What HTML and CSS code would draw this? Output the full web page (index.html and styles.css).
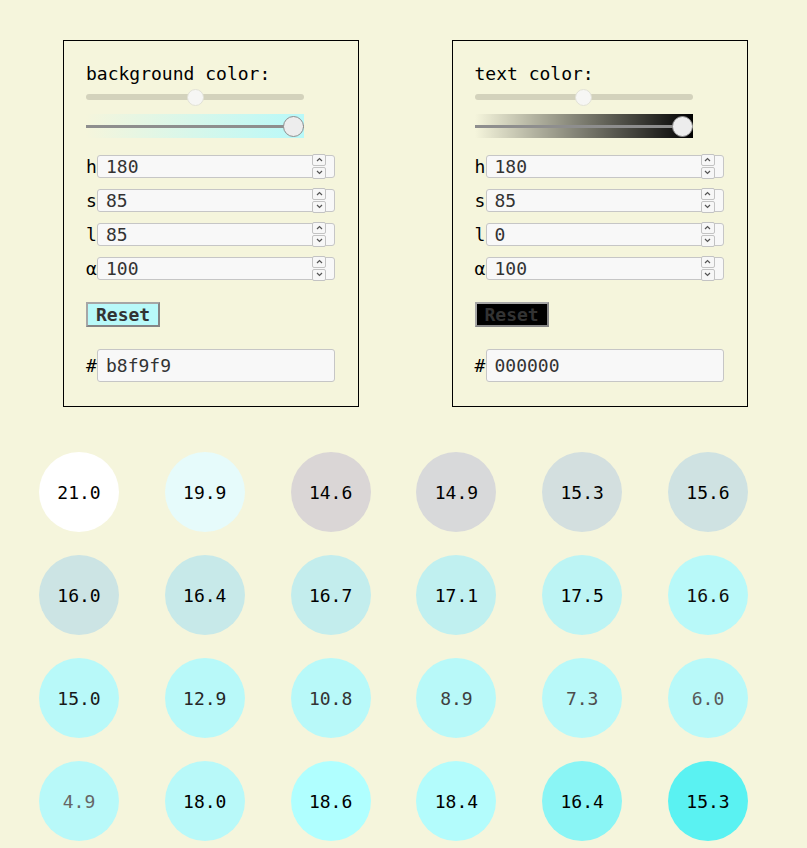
FILE: index.html
```html
<!DOCTYPE html>
<html>
<head>
  <meta charset="UTF-8">
  <link rel="stylesheet" href="styles.css">
</head>
<body>
  <div class="pickers">
    <div class="picker">
      <div class="picker-title">background color:</div>
      <input type="range" class="hue-slider" min="0" max="360" value="180">
      <input type="range" class="alpha-slider alpha-bg" min="0" max="100" value="100">
      <div class="fields">
        <div class="field">
          <span class="field-label">h</span>
          <div class="number-box">
            <input type="number" value="180">
            <div class="spin">
              <span class="spin-btn"><svg width="7" height="5" viewBox="0 0 7 5"><polyline points="1,4 3.5,1.5 6,4" fill="none" stroke="#555" stroke-width="1.2"/></svg></span>
              <span class="spin-btn"><svg width="7" height="5" viewBox="0 0 7 5"><polyline points="1,1 3.5,3.5 6,1" fill="none" stroke="#555" stroke-width="1.2"/></svg></span>
            </div>
          </div>
        </div>
        <div class="field">
          <span class="field-label">s</span>
          <div class="number-box">
            <input type="number" value="85">
            <div class="spin">
              <span class="spin-btn"><svg width="7" height="5" viewBox="0 0 7 5"><polyline points="1,4 3.5,1.5 6,4" fill="none" stroke="#555" stroke-width="1.2"/></svg></span>
              <span class="spin-btn"><svg width="7" height="5" viewBox="0 0 7 5"><polyline points="1,1 3.5,3.5 6,1" fill="none" stroke="#555" stroke-width="1.2"/></svg></span>
            </div>
          </div>
        </div>
        <div class="field">
          <span class="field-label">l</span>
          <div class="number-box">
            <input type="number" value="85">
            <div class="spin">
              <span class="spin-btn"><svg width="7" height="5" viewBox="0 0 7 5"><polyline points="1,4 3.5,1.5 6,4" fill="none" stroke="#555" stroke-width="1.2"/></svg></span>
              <span class="spin-btn"><svg width="7" height="5" viewBox="0 0 7 5"><polyline points="1,1 3.5,3.5 6,1" fill="none" stroke="#555" stroke-width="1.2"/></svg></span>
            </div>
          </div>
        </div>
        <div class="field">
          <span class="field-label">α</span>
          <div class="number-box">
            <input type="number" value="100">
            <div class="spin">
              <span class="spin-btn"><svg width="7" height="5" viewBox="0 0 7 5"><polyline points="1,4 3.5,1.5 6,4" fill="none" stroke="#555" stroke-width="1.2"/></svg></span>
              <span class="spin-btn"><svg width="7" height="5" viewBox="0 0 7 5"><polyline points="1,1 3.5,3.5 6,1" fill="none" stroke="#555" stroke-width="1.2"/></svg></span>
            </div>
          </div>
        </div>
      </div>
      <button class="reset reset-bg">Reset</button>
      <div class="hex-row"><span class="field-label">#</span><input type="text" class="hex-input" value="b8f9f9"></div>
    </div>

    <div class="picker">
      <div class="picker-title">text color:</div>
      <input type="range" class="hue-slider" min="0" max="360" value="180">
      <input type="range" class="alpha-slider alpha-text" min="0" max="100" value="100">
      <div class="fields">
        <div class="field">
          <span class="field-label">h</span>
          <div class="number-box">
            <input type="number" value="180">
            <div class="spin">
              <span class="spin-btn"><svg width="7" height="5" viewBox="0 0 7 5"><polyline points="1,4 3.5,1.5 6,4" fill="none" stroke="#555" stroke-width="1.2"/></svg></span>
              <span class="spin-btn"><svg width="7" height="5" viewBox="0 0 7 5"><polyline points="1,1 3.5,3.5 6,1" fill="none" stroke="#555" stroke-width="1.2"/></svg></span>
            </div>
          </div>
        </div>
        <div class="field">
          <span class="field-label">s</span>
          <div class="number-box">
            <input type="number" value="85">
            <div class="spin">
              <span class="spin-btn"><svg width="7" height="5" viewBox="0 0 7 5"><polyline points="1,4 3.5,1.5 6,4" fill="none" stroke="#555" stroke-width="1.2"/></svg></span>
              <span class="spin-btn"><svg width="7" height="5" viewBox="0 0 7 5"><polyline points="1,1 3.5,3.5 6,1" fill="none" stroke="#555" stroke-width="1.2"/></svg></span>
            </div>
          </div>
        </div>
        <div class="field">
          <span class="field-label">l</span>
          <div class="number-box">
            <input type="number" value="0">
            <div class="spin">
              <span class="spin-btn"><svg width="7" height="5" viewBox="0 0 7 5"><polyline points="1,4 3.5,1.5 6,4" fill="none" stroke="#555" stroke-width="1.2"/></svg></span>
              <span class="spin-btn"><svg width="7" height="5" viewBox="0 0 7 5"><polyline points="1,1 3.5,3.5 6,1" fill="none" stroke="#555" stroke-width="1.2"/></svg></span>
            </div>
          </div>
        </div>
        <div class="field">
          <span class="field-label">α</span>
          <div class="number-box">
            <input type="number" value="100">
            <div class="spin">
              <span class="spin-btn"><svg width="7" height="5" viewBox="0 0 7 5"><polyline points="1,4 3.5,1.5 6,4" fill="none" stroke="#555" stroke-width="1.2"/></svg></span>
              <span class="spin-btn"><svg width="7" height="5" viewBox="0 0 7 5"><polyline points="1,1 3.5,3.5 6,1" fill="none" stroke="#555" stroke-width="1.2"/></svg></span>
            </div>
          </div>
        </div>
      </div>
      <button class="reset reset-text">Reset</button>
      <div class="hex-row"><span class="field-label">#</span><input type="text" class="hex-input" value="000000"></div>
    </div>
  </div>

  <div class="swatches">
    <div class="swatch" style="background: #ffffff; color: #000;">21.0</div>
    <div class="swatch" style="background: #e6fbfb; color: #000;">19.9</div>
    <div class="swatch" style="background: #dad6d6; color: #000;">14.6</div>
    <div class="swatch" style="background: #d8d9da; color: #000;">14.9</div>
    <div class="swatch" style="background: #d3dfdf; color: #000;">15.3</div>
    <div class="swatch" style="background: #cfe2e2; color: #000;">15.6</div>

    <div class="swatch" style="background: #cce4e4; color: #000;">16.0</div>
    <div class="swatch" style="background: #c7e9e9; color: #000;">16.4</div>
    <div class="swatch" style="background: #c3eded; color: #000;">16.7</div>
    <div class="swatch" style="background: #c0f0f0; color: #000;">17.1</div>
    <div class="swatch" style="background: #bcf4f4; color: #000;">17.5</div>
    <div class="swatch" style="background: #b8f9f9; color: #0d0d0d;">16.6</div>

    <div class="swatch" style="background: #b8f9f9; color: #191919;">15.0</div>
    <div class="swatch" style="background: #b8f9f9; color: #262626;">12.9</div>
    <div class="swatch" style="background: #b8f9f9; color: #333333;">10.8</div>
    <div class="swatch" style="background: #b8f9f9; color: #404040;">8.9</div>
    <div class="swatch" style="background: #b8f9f9; color: #4d4d4d;">7.3</div>
    <div class="swatch" style="background: #b8f9f9; color: #595959;">6.0</div>

    <div class="swatch" style="background: #b8f9f9; color: #666666;">4.9</div>
    <div class="swatch" style="background: #b8f9f9; color: #000;">18.0</div>
    <div class="swatch" style="background: #b0ffff; color: #000;">18.6</div>
    <div class="swatch" style="background: #b3fcfc; color: #000;">18.4</div>
    <div class="swatch" style="background: #8af5f5; color: #000;">16.4</div>
    <div class="swatch" style="background: #5af2f2; color: #000;">15.3</div>
  </div>
</body>
</html>
```

FILE: styles.css
```css
:root {
  --page-bg: #f5f5dc;
  --field-bg: #f8f8f8;
  --field-border: #c6c6c6;
  --track-color: #d3d2bc;
  --mono: "DejaVu Sans Mono", "Liberation Mono", monospace;
}

body {
  margin: 0;
  background: var(--page-bg);
  font-family: var(--mono);
  font-size: 18px;
  color: #000;
}

.pickers {
  display: flex;
  gap: 92.5px;
  padding: 40px 0 0 63px;
}

.picker {
  box-sizing: border-box;
  width: 296px;
  border: 1px solid #000;
  padding: 22px 22px 24px 22px;
  display: flex;
  flex-direction: column;
  align-items: flex-start;
}

.picker-title {
  line-height: 21px;
}

/* hue slider */
.hue-slider {
  -webkit-appearance: none;
  appearance: none;
  width: 218px;
  height: 16px;
  margin: 5px 0 0 0;
  background: transparent;
}

.hue-slider::-webkit-slider-runnable-track {
  height: 6px;
  border-radius: 3px;
  background: var(--track-color);
}

.hue-slider::-webkit-slider-thumb {
  -webkit-appearance: none;
  width: 17px;
  height: 17px;
  margin-top: -5.5px;
  border-radius: 50%;
  background: #f6f6f4;
  border: 1px solid #e2e2d6;
  box-sizing: border-box;
}

/* alpha slider */
.alpha-slider {
  -webkit-appearance: none;
  appearance: none;
  width: 218px;
  height: 24px;
  margin: 9px 0 0 0;
}

.alpha-bg {
  background: linear-gradient(to right, rgba(184, 249, 249, 0), #b8f9f9);
}

.alpha-text {
  background: linear-gradient(to right, rgba(0, 0, 0, 0), #000);
}

.alpha-slider::-webkit-slider-runnable-track {
  height: 3px;
  background: #8e8e8e;
}

.alpha-slider::-webkit-slider-thumb {
  -webkit-appearance: none;
  width: 21px;
  height: 21px;
  margin-top: -9px;
  border-radius: 50%;
  background: #ededed;
  border: 1px solid #8e8e8e;
  box-sizing: border-box;
}

.fields {
  display: flex;
  flex-direction: column;
  gap: 11px;
  margin-top: 17px;
}

.field,
.hex-row {
  display: flex;
  align-items: center;
}

.field-label {
  width: 11px;
  line-height: 21px;
}

.number-box {
  box-sizing: border-box;
  width: 238px;
  height: 23px;
  display: flex;
  align-items: center;
  padding: 0 8px;
  background: var(--field-bg);
  border: 1px solid var(--field-border);
  border-radius: 3px;
}

.number-box input {
  flex: 1;
  min-width: 0;
  padding: 0;
  margin: 0;
  border: none;
  outline: none;
  background: transparent;
  font-family: var(--mono);
  font-size: 18px;
  line-height: 21px;
  color: #333;
}

.number-box input::-webkit-inner-spin-button,
.number-box input::-webkit-outer-spin-button {
  -webkit-appearance: none;
  margin: 0;
}

.spin {
  display: flex;
  flex-direction: column;
  gap: 1px;
  margin: -2px 0 -1px 0;
}

.spin-btn {
  box-sizing: border-box;
  width: 14px;
  height: 12px;
  display: flex;
  align-items: center;
  justify-content: center;
  background: #f7f7f7;
  border: 1px solid #c3c3c3;
  border-radius: 2px;
}

.hex-input {
  box-sizing: border-box;
  width: 238px;
  height: 33px;
  padding: 5px 8px;
  margin: 0;
  font-family: var(--mono);
  font-size: 18px;
  line-height: 21px;
  color: #333;
  background: var(--field-bg);
  border: 1px solid var(--field-border);
  border-radius: 3px;
}

.reset {
  margin-top: 22px;
  height: 25px;
  padding: 0 8px;
  font-family: var(--mono);
  font-size: 18px;
  font-weight: 700;
  line-height: 21px;
  color: #333;
  border: 2px solid;
  border-color: #a6a6a6 #858585 #858585 #a6a6a6;
  border-radius: 0;
}

.reset-bg {
  background: #b8f9f9;
}

.reset-text {
  background: #000;
}

.hex-row {
  margin-top: 22px;
}

.swatches {
  display: grid;
  grid-template-columns: repeat(6, 80px);
  column-gap: 45.8px;
  row-gap: 23px;
  padding: 45px 0 0 39px;
}

.swatch {
  width: 80px;
  height: 80px;
  border-radius: 50%;
  display: flex;
  align-items: center;
  justify-content: center;
}
```
